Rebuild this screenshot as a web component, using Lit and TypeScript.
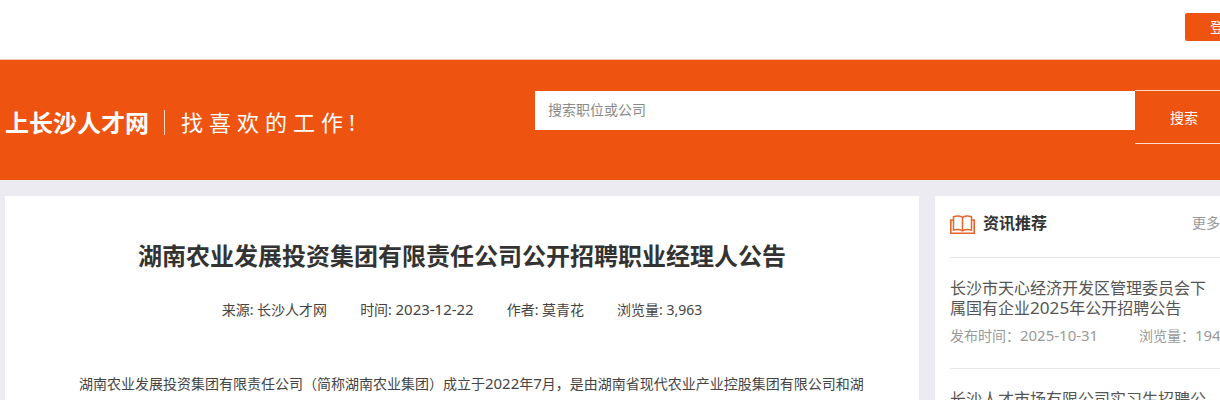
import { LitElement, html, css } from "lit";
import { customElement } from "lit/decorators.js";

@customElement("app-root")
export class AppRoot extends LitElement {
  static styles = css`
    :host { display: block; width: 1220px; height: 400px; overflow: hidden; background: #ebebf1; font-family: "Noto Sans", "Noto Sans CJK SC", sans-serif; color: #333; }
    .page { width: 1300px; }
    .top { height: 60px; background: #fff; border-bottom: 1px solid #f4c9b2; display: flex; padding: 13px 0 0 1185px; box-sizing: border-box; }
    .login { width: 80px; height: 28px; background: #ee5310; color: #fff; border-radius: 2px; font-size: 14px; line-height: 28px; padding-left: 25px; box-sizing: border-box; white-space: nowrap; }
    .band { height: 120px; background: #ee5310; display: flex; align-items: flex-start; }
    .logo { margin: 48px 0 0 5px; width: 159px; font-size: 24px; font-weight: 700; line-height: 30px; color: #fff; white-space: nowrap; }
    .rule { width: 1px; height: 25px; margin-top: 50px; background: #fbdcc9; }
    .slogan { margin: 46px 0 0 16px; width: 354px; font-size: 22px; font-weight: 400; line-height: 32px; letter-spacing: 6px; color: #fff; white-space: nowrap; }
    .input { width: 600px; height: 39px; margin-top: 31px; background: #fff; font-size: 14px; line-height: 37px; padding-left: 13px; box-sizing: border-box; color: #8a8a8a; }
    .btn { width: 165px; height: 54px; margin-top: 30px; border-top: 1px solid #fbdcc9; border-bottom: 1px solid #fbdcc9; box-sizing: border-box; color: #fff; font-size: 14px; line-height: 54px; padding-left: 35px; }
    .body { display: flex; gap: 16px; padding: 16px 0 0 5px; }
    .main { width: 914px; height: 300px; background: #fff; display: flex; flex-direction: column; align-items: center; }
    h1 { margin: 43px 0 0; font-size: 24px; font-weight: 700; line-height: 34px; color: #333; }
    .meta { display: flex; gap: 33px; margin-top: 27px; font-size: 14px; line-height: 20px; color: #444; }
    .n { font-size: 1.07em; line-height: 1; }
    .para { margin: 50px 0 0 74px; align-self: flex-start; font-size: 14px; line-height: 28px; color: #444; white-space: nowrap; }
    .side { width: 340px; height: 300px; background: #fff; padding: 0 15px; box-sizing: border-box; }
    .head { display: flex; align-items: flex-start; height: 62px; padding-top: 14px; border-bottom: 1px solid #e6e6e6; width: 300px; box-sizing: border-box; }
    .head svg { display: block; margin: 5px 8px 0 0; }
    .head b { font-size: 16px; font-weight: 700; color: #333; line-height: 26px; }
    .more { margin: 0 30px 0 auto; font-size: 14px; line-height: 25px; color: #999; width: 28px; white-space: nowrap; }
    .item { width: 300px; height: 111px; border-bottom: 1px solid #e6e6e6; box-sizing: border-box; padding-top: 20px; }
    .title { font-size: 16px; line-height: 20px; width: 260px; color: #555; }
    .line { display: block; white-space: nowrap; }
    .info { display: flex; margin-top: 8px; font-size: 14px; line-height: 20px; color: #999; white-space: nowrap; }
    .info span.d { width: 189px; }
    .next { padding-top: 20px; font-size: 16px; line-height: 20px; color: #555; width: 260px; }
  `;

  render() {
    return html`<div class="page">
      <div class="top"><div class="login">登录</div></div>
      <div class="band">
        <div class="logo">上长沙人才网</div>
        <div class="rule"></div>
        <div class="slogan">找喜欢的工作!</div>
        <div class="input">搜索职位或公司</div>
        <div class="btn">搜索</div>
      </div>
      <div class="body">
        <div class="main">
          <h1>湖南农业发展投资集团有限责任公司公开招聘职业经理人公告</h1>
          <div class="meta">
            <span>来源: 长沙人才网</span><span>时间: <span class="n">2023-12-22</span></span><span>作者: 莫青花</span><span>浏览量: 3,963</span>
          </div>
          <div class="para">湖南农业发展投资集团有限责任公司（简称湖南农业集团）成立于<span class="n">2022</span>年<span class="n">7</span>月，是由湖南省现代农业产业控股集团有限公司和湖</div>
        </div>
        <div class="side">
          <div class="head">
            <svg width="25" height="19" viewBox="0 0 25 19" fill="none" stroke="#e8642a" stroke-width="1.5">
              <path d="M3.5 1.8C6.5 .6 10 .8 12.5 2.3C15 .8 18.5 .6 21.5 1.8V15C18.5 14.2 15 14.4 12.5 15.8C10 14.4 6.5 14.2 3.5 15Z"/>
              <path d="M12.5 2.3V15.8"/>
              <path d="M3.5 5H.8V18.2H24.2V5H21.5" stroke-width="1.6"/>
            </svg>
            <b>资讯推荐</b>
            <span class="more">更多</span>
          </div>
          <div class="item">
            <div class="title"><span class="line">长沙市天心经济开发区管理委员会下</span><span class="line">属国有企业<span class="n">2025</span>年公开招聘公告</span></div>
            <div class="info"><span class="d">发布时间：<span class="n">2025-10-31</span></span><span>浏览量：<span class="n">194</span></span></div>
          </div>
          <div class="next">长沙人才市场有限公司实习生招聘公告</div>
        </div>
      </div>
    </div>`;
  }
}
